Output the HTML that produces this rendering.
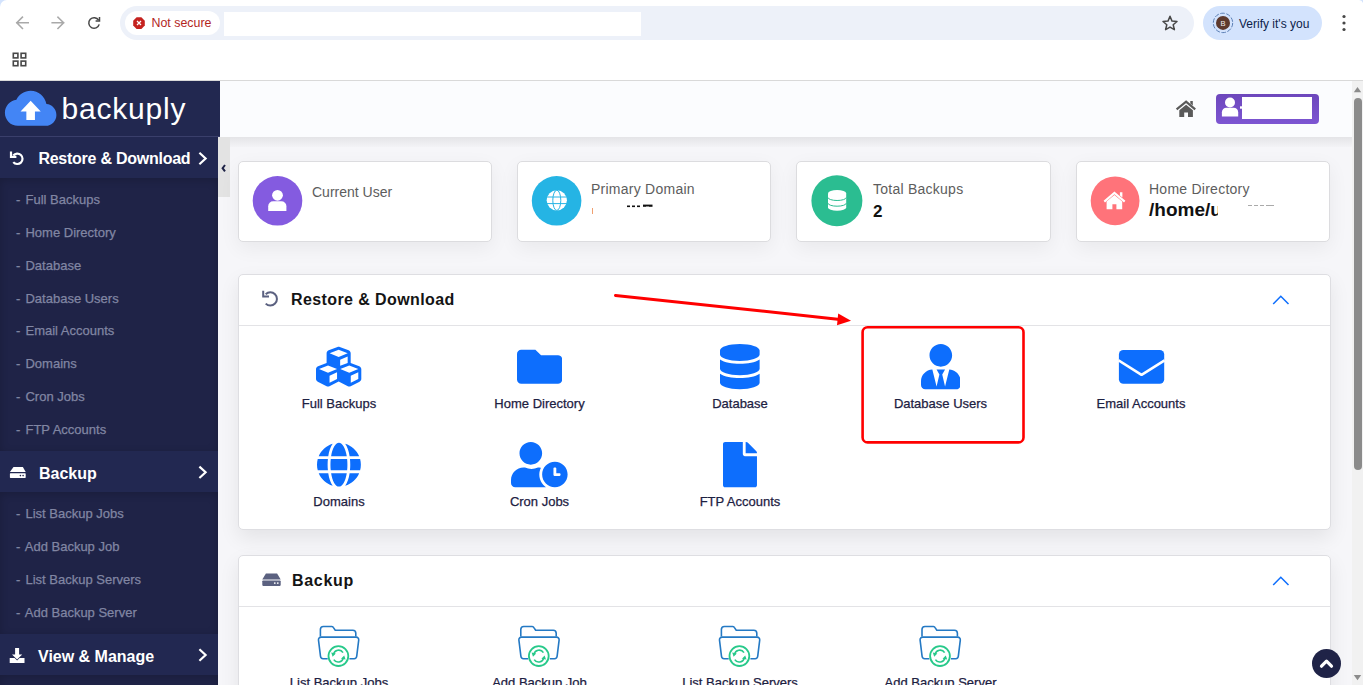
<!DOCTYPE html>
<html><head><meta charset="utf-8">
<style>
*{box-sizing:border-box;margin:0;padding:0}
html,body{width:1363px;height:685px;overflow:hidden;background:#fff;font-family:"Liberation Sans",sans-serif}
.a{position:absolute}
/* chrome */
#chrome{left:0;top:0;width:1363px;height:81px;background:#fff;border-bottom:1px solid #d9d9d9}
#omni{left:120px;top:6px;width:1074px;height:34px;border-radius:17px;background:#edf1f9}
#chip{left:125px;top:11px;width:95px;height:24px;border-radius:12px;background:#fff}
#verify{left:1203px;top:6px;width:119px;height:34px;border-radius:17px;background:#d3e3fd}
/* sidebar */
#side{left:0;top:81px;width:218px;height:604px;background:#1f2347}
#logo{left:0;top:81px;width:220px;height:56px;background:#222850;border-bottom:1px solid #3a3f6b}
.sh{left:0;width:218px;height:41px;background:#222851;color:#fff;font-weight:bold;font-size:16px}
.sh span{position:absolute;top:13.5px}
.si i{font-style:normal;margin-right:1.5px}
.si{left:16px;color:#8186a3;font-size:13px;white-space:pre;-webkit-text-stroke:0.25px #8186a3}
/* header */
#hdr{left:220px;top:81px;width:1132px;height:56px;background:#fbfcfe}
#main{left:218px;top:137px;width:1134px;height:548px;background:#f6f6f9}
#tab{left:218px;top:137px;width:12px;height:60px;background:#e3e3e3}
.card{top:161px;width:254px;height:81px;background:#fff;border:1px solid #dcdcdf;border-radius:5px;box-shadow:0 6px 20px rgba(0,0,0,.06)}
.circ{position:absolute;left:14px;top:14px;width:50px;height:50px;border-radius:50%}
.ct{position:absolute;left:74px;font-size:14px;color:#5d5d5d;white-space:pre}
.panel{left:238px;width:1093px;background:#fff;border:1px solid #dedee2;border-radius:5px;box-shadow:0 8px 20px rgba(0,0,0,.08)}
.ph{position:absolute;left:0;top:0;width:100%;height:51px;border-bottom:1px solid #e3e3e6}
.pt{position:absolute;left:52px;top:16px;font-size:16px;font-weight:bold;color:#141414;letter-spacing:0.4px}
.lbl{position:absolute;width:200px;text-align:center;font-size:13px;color:#1d2142;white-space:pre;-webkit-text-stroke:0.25px #1d2142}
#sb{left:1352px;top:81px;width:11px;height:604px;background:#f1f1f1}
</style></head><body>
<div id="chrome" class="a"></div>
<div id="omni" class="a"></div>
<div id="chip" class="a"></div>
<div class="a" style="left:224px;top:12px;width:417px;height:24px;background:#fff"></div>
<div class="a" style="left:151.5px;top:16.3px;font-size:12.4px;color:#b3261e">Not secure</div>
<div id="verify" class="a"></div>
<svg class="a" style="left:0;top:0" width="1363" height="45">
 <path d="M0 7 A7 7 0 0 1 7 0 L0 0Z" fill="#d3e3fd"/>
 <path d="M1363 3 A5 5 0 0 0 1358 0 L1363 0Z" fill="#d3e3fd"/>
 <g stroke="#a9a9a9" stroke-width="1.6" fill="none" stroke-linecap="square">
  <path d="M16.8 22.8H28.2M22.4 17.2L16.8 22.8L22.4 28.4"/>
  <path d="M52.2 22.8H63.6M58 17.2L63.6 22.8L58 28.4"/>
 </g>
 <path d="M98.6 20.2A5.3 5.3 0 1 0 99.2 24.4" stroke="#474747" stroke-width="1.5" fill="none"/>
 <path d="M95.6 21H99.5V17.1" stroke="#474747" stroke-width="1.5" fill="none"/>
 <polygon points="136.6,17.3 141.4,17.3 144.8,20.7 144.8,25.5 141.4,28.9 136.6,28.9 133.2,25.5 133.2,20.7" fill="#c5221f"/>
 <path d="M137 21L141 25M141 21L137 25" stroke="#fff" stroke-width="1.3"/>
 <path d="M1170 16.3L1172 21.1L1177 21.5L1173.2 24.8L1174.4 29.7L1170 27.1L1165.6 29.7L1166.8 24.8L1163 21.5L1168 21.1Z" stroke="#474747" stroke-width="1.5" fill="none" stroke-linejoin="round"/>
 <circle cx="1223" cy="22.9" r="9.7" fill="none" stroke="#5b7fb5" stroke-width="1" stroke-dasharray="4.5 1.6"/>
 <circle cx="1223" cy="22.9" r="7" fill="#5e3a2e"/>
 <text x="1223" y="25.6" font-size="7.5" fill="#eee" text-anchor="middle" font-family="Liberation Sans">B</text>
 <circle cx="1344" cy="16.5" r="1.6" fill="#474747"/><circle cx="1344" cy="23" r="1.6" fill="#474747"/><circle cx="1344" cy="29.5" r="1.6" fill="#474747"/>
</svg>
<svg class="a" style="left:12px;top:52px" width="16" height="16"><g fill="none" stroke="#474747" stroke-width="1.6"><rect x="1.3" y="1.3" width="4.6" height="4.6"/><rect x="9.1" y="1.3" width="4.6" height="4.6"/><rect x="1.3" y="9.1" width="4.6" height="4.6"/><rect x="9.1" y="9.1" width="4.6" height="4.6"/></g></svg>
<div class="a" style="left:1239px;top:16.5px;font-size:12px;color:#0b1d4a">Verify it's you</div>

<div id="side" class="a"></div>
<div id="logo" class="a"></div>
<div class="a" style="left:61.5px;top:91.5px;font-size:30px;color:#fff;letter-spacing:0.8px">backuply</div>


<div class="a" style="left:0;top:178px;width:218px;height:273px;box-shadow:inset 0 2px 8px rgba(0,0,0,.18)"></div>
<div class="a" style="left:0;top:492px;width:218px;height:142px;box-shadow:inset 0 2px 8px rgba(0,0,0,.18)"></div>
<div class="a" style="left:0;top:675px;width:218px;height:30px;box-shadow:inset 0 2px 8px rgba(0,0,0,.18)"></div>
<div class="sh a" style="top:137px"><span style="left:38.4px;top:12.8px;letter-spacing:-0.25px">Restore &amp; Download</span></div>
<div class="si a" style="top:192px"><i>-</i> Full Backups</div>
<div class="si a" style="top:225px"><i>-</i> Home Directory</div>
<div class="si a" style="top:258px"><i>-</i> Database</div>
<div class="si a" style="top:291px"><i>-</i> Database Users</div>
<div class="si a" style="top:323px"><i>-</i> Email Accounts</div>
<div class="si a" style="top:356px"><i>-</i> Domains</div>
<div class="si a" style="top:389px"><i>-</i> Cron Jobs</div>
<div class="si a" style="top:422px"><i>-</i> FTP Accounts</div>
<div class="sh a" style="top:451px"><span style="left:39px">Backup</span></div>
<div class="si a" style="top:506px"><i>-</i> List Backup Jobs</div>
<div class="si a" style="top:539px"><i>-</i> Add Backup Job</div>
<div class="si a" style="top:572px"><i>-</i> List Backup Servers</div>
<div class="si a" style="top:605px"><i>-</i> Add Backup Server</div>
<div class="sh a" style="top:634px"><span style="left:38px">View &amp; Manage</span></div>

<div id="hdr" class="a"></div>
<div id="main" class="a"></div>
<div class="a" style="left:218px;top:137px;width:1134px;height:10px;background:linear-gradient(#e4e4e7,#f3f3f6)"></div>
<div class="a" style="left:1216px;top:94px;width:103px;height:30px;border-radius:4px;background:linear-gradient(#6d47bc,#7d55d2)"></div>
<div class="a" style="left:1242px;top:97px;width:70px;height:22px;background:#fff"></div>
<svg class="a" style="left:1170px;top:90px" width="80" height="40">
 <g fill="#5a5a5a">
  <path d="M6.6 19.4L16.1 11.7L25.2 19.4" stroke="#5a5a5a" stroke-width="2.2" fill="none"/>
  <path d="M20.3 11.1H22.8V15.6L20.3 13.5Z"/>
  <path d="M9.3 20.3L16.1 14.7L22.9 20.3V27H18V22.4H14.2V27H9.3Z"/>
 </g>
 <g fill="#fff"><circle cx="60" cy="12.5" r="5"/><path d="M51.9 26.4V22.3A4.5 4.5 0 0 1 56.4 17.8H63.7A4.5 4.5 0 0 1 68.2 22.3V26.4Z"/><rect x="70" y="16.3" width="3" height="2.4"/></g>
</svg>
<div id="tab" class="a"></div>
<svg class="a" style="left:0;top:0" width="232" height="685">
 <g transform="translate(4.9,82.04) scale(2.146,2.19)"><path d="M19.35 10.04C18.67 6.59 15.64 4 12 4 9.11 4 6.6 5.64 5.35 8.04 2.34 8.36 0 10.91 0 14c0 3.31 2.69 6 6 6h13c2.76 0 5-2.24 5-5 0-2.64-2.05-4.78-4.65-4.96z" fill="#4385f5"/><path d="M14 13.4v3.9h-4v-3.9H7.3l4.7-4.8 4.7 4.8h-2.7z" fill="#fff"/></g>
 <g fill="none" stroke="#fff" stroke-width="2.2">
  <path d="M13.3 155.5A5.2 5.2 0 1 1 13.3 162.1"/>
  <path d="M11 151.5V156.8H16.4"/>
  <path d="M199.4 152.8L205.6 158.5L199.4 164.2"/>
  <path d="M199.4 466.6L205.6 472.3L199.4 478"/>
  <path d="M199.4 649.3L205.6 655L199.4 660.7"/>
 </g>
 <path d="M13.5 466.9H22.9L25.7 472H9.9Z" fill="#fff"/>
 <rect x="9.9" y="473.3" width="15.8" height="4.6" rx="0.6" fill="#fff"/>
 <circle cx="20.4" cy="475.6" r="0.8" fill="#1f2347"/><circle cx="23.1" cy="475.6" r="0.8" fill="#1f2347"/>
 <path d="M15.1 648.1H19.1V654.5H22.2L17.1 659.6L12 654.5H15.1Z" fill="#fff"/>
 <path d="M9.7 658H14.6L17.1 660.5L19.6 658H24.5V662.9H9.7Z" fill="#fff"/>
 <path d="M225 165L222.6 168.2L225 171.4" stroke="#1f2347" stroke-width="2" fill="none"/>
</svg>

<div class="card a" style="left:238px"></div>
<div class="card a" style="left:517px"></div>
<div class="card a" style="left:796px;width:255px"></div>
<div class="card a" style="left:1076px"></div>
<div class="ct a" style="left:312px;top:184px">Current User</div>
<div class="ct a" style="left:591px;top:180.5px;letter-spacing:0.25px">Primary Domain</div>
<div class="ct a" style="left:873px;top:180.5px;letter-spacing:0.25px">Total Backups</div>
<div class="ct a" style="left:1149px;top:180.5px;letter-spacing:0.25px">Home Directory</div>
<div class="a" style="left:873px;top:201.5px;font-size:17px;font-weight:bold;color:#111">2</div>
<div class="a" style="left:1149px;top:198.8px;font-size:19px;font-weight:bold;color:#111">/home/u</div>
<div class="a" style="left:1218px;top:196px;width:10px;height:24px;background:#fff"></div>
<svg class="a" style="left:0;top:0" width="1363" height="685">
 <circle cx="277.5" cy="200.8" r="24.8" fill="#845be0"/>
 <circle cx="556.6" cy="200.8" r="24.8" fill="#25b4e4"/>
 <circle cx="836.9" cy="200.8" r="25.5" fill="#2bbd91"/>
 <circle cx="1115.1" cy="200.8" r="24.4" fill="#ff737a"/>
 <g fill="#fff">
  <circle cx="277.5" cy="195.3" r="5.4"/>
  <path d="M268.2 211V206.2A5 5 0 0 1 273.2 201.2H281.4A5 5 0 0 1 286.4 206.2V211Z"/>
 </g>
 <g>
  <circle cx="556.8" cy="200.3" r="10.1" fill="#fff"/>
  <g stroke="#25b4e4" stroke-width="1" fill="none">
   <ellipse cx="556.8" cy="200.3" rx="4" ry="10.1"/>
   <path d="M546.5 197H567M546.5 203.6H567"/>
  </g>
 </g>
 <g fill="#fff">
  <path d="M828 193.4A9.1 3.4 0 0 1 846.2 193.4V207.4A9.1 3.4 0 0 1 828 207.4Z"/>
 </g>
 <g stroke="#2bbd91" stroke-width="1" fill="none">
  <path d="M828 197.5A9.1 3 0 0 0 846.2 197.5"/>
  <path d="M828 203.2A9.1 3 0 0 0 846.2 203.2"/>
 </g>
 <g fill="#fff">
  <path d="M1103.6 200.8L1114.4 191.6L1125.4 200.8L1124 202.4L1114.4 194.3L1105 202.4Z"/>
  <path d="M1119.9 192.2H1122.4V197.6L1119.9 195.5Z"/>
  <path d="M1106.6 201.6L1114.4 195L1122.2 201.6V209.2H1116.4V204.2H1112.4V209.2H1106.6Z"/>
 </g>
 <!-- primary domain redactions -->
 <rect x="592" y="208" width="1" height="6" fill="#f0a070"/>
 <g fill="#111"><rect x="627" y="205.5" width="3" height="1.6"/><rect x="632" y="205.5" width="3" height="1.6"/><rect x="637" y="205.5" width="3" height="1.6"/><rect x="643" y="204.6" width="9.5" height="2.2"/><rect x="646" y="206.6" width="3" height="3" fill="#fff"/></g>
 <g fill="#aaa"><rect x="1248" y="205" width="4" height="1"/><rect x="1254" y="205" width="4" height="1"/><rect x="1260" y="205" width="4" height="1"/><rect x="1266" y="205" width="8" height="1"/></g>
</svg>
<div class="panel a" style="top:274px;height:256px"><div class="ph"></div><div class="pt">Restore &amp; Download</div></div>
<div class="panel a" style="top:555px;height:200px"><div class="ph"></div><div class="pt" style="left:53px;letter-spacing:0.7px">Backup</div></div>

<svg class="a" style="left:316.35px;top:344.3px" width="45.30" height="45.3" viewBox="0 0 512 512"><path d="M488.6 250.2L392 214V105.5c0-15-9.3-28.4-23.4-33.7l-100-37.5c-8.1-3.1-17.1-3.1-25.3 0l-100 37.5c-14.1 5.3-23.4 18.7-23.4 33.7V214l-96.6 36.2C9.3 255.5 0 268.9 0 283.9V394c0 13.6 7.7 26.1 19.9 32.2l100 50c10.1 5.1 22.1 5.1 32.2 0l103.9-52 103.9 52c10.1 5.1 22.1 5.1 32.2 0l100-50c12.200-6.1 19.9-18.6 19.9-32.2V283.9c0-15-9.3-28.4-23.4-33.7zM358 214.8l-85 31.9v-68.2l85-37v73.3zM154 104.1l102-38.2 102 38.2v.6l-102 41.4-102-41.4v-.6zm84 291.1l-85 42.5v-79.1l85-38.8v75.4zm0-112l-102 41.4-102-41.4v-.6l102-38.2 102 38.2v.6zm240 112l-85 42.5v-79.1l85-38.8v75.4zm0-112l-102 41.4-102-41.4v-.6l102-38.2 102 38.2v.6z" fill="#0d6efd"/></svg>
<svg class="a" style="left:516.85px;top:344.3px" width="45.30" height="45.3" viewBox="0 0 512 512"><path d="M464 128H272l-64-64H48C21.49 64 0 85.49 0 112v288c0 26.51 21.49 48 48 48h416c26.51 0 48-21.49 48-48V176c0-26.51-21.49-48-48-48z" fill="#0d6efd"/></svg>
<svg class="a" style="left:720.18px;top:344.3px" width="39.64" height="45.3" viewBox="0 0 448 512"><path d="M448 73.143v45.714C448 159.143 347.667 192 224 192S0 159.143 0 118.857V73.143C0 32.857 100.333 0 224 0s224 32.857 224 73.143zM448 176v102.857C448 319.143 347.667 352 224 352S0 319.143 0 278.857V176c48.125 33.143 136.208 48.572 224 48.572S399.874 209.143 448 176zm0 160v102.857C448 479.143 347.667 512 224 512S0 479.143 0 438.857V336c48.125 33.143 136.208 48.572 224 48.572S399.874 369.143 448 336z" fill="#0d6efd"/></svg>
<svg class="a" style="left:920.58px;top:344.3px" width="39.64" height="45.3" viewBox="0 0 448 512"><path d="M224 256c70.7 0 128-57.3 128-128S294.7 0 224 0 96 57.3 96 128s57.3 128 128 128zm95.8 32.6L272 480l-32-136 32-56h-96l32 56-32 136-47.8-191.4C56.9 292 0 350.3 0 422.4V464c0 26.5 21.5 48 48 48h352c26.5 0 48-21.5 48-48v-41.6c0-72.1-56.9-130.4-128.2-133.8z" fill="#0d6efd"/></svg>
<svg class="a" style="left:317.06px;top:442.4px" width="43.88" height="45.3" viewBox="0 0 496 512"><path d="M336.5 160C322 70.7 287.8 8 248 8s-74 62.7-88.5 152h177zM152 256c0 22.2 1.2 43.5 3.3 64h185.3c2.1-20.5 3.3-41.8 3.3-64s-1.2-43.5-3.3-64H155.3c-2.1 20.5-3.3 41.8-3.3 64zm324.7-96c-28.6-67.9-86.5-120.4-158-141.6 24.4 33.8 41.2 84.7 50 141.6h108zM177.2 18.4C105.8 39.6 47.8 92.1 19.3 160h108c8.7-56.9 25.5-107.8 49.9-141.6zM487.4 192H372.7c2.1 21 3.3 42.5 3.3 64s-1.2 43-3.3 64h114.6c5.5-20.5 8.6-41.8 8.6-64s-3.1-43.5-8.5-64zM120 256c0-21.5 1.2-43 3.3-64H8.6C3.2 212.5 0 233.8 0 256s3.2 43.5 8.6 64h114.6c-2-21-3.2-42.5-3.2-64zm39.5 96c14.5 89.3 48.7 152 88.5 152s74-62.7 88.5-152h-177zm159.3 141.6c71.4-21.2 129.4-73.7 158-141.6h-108c-8.800 56.9-25.6 107.8-50 141.6zM19.3 352c28.6 67.9 86.5 120.4 158 141.6-24.4-33.8-41.2-84.7-50-141.6h-108z" fill="#0d6efd"/></svg>
<svg class="a" style="left:511.29px;top:442.4px" width="56.62" height="45.3" viewBox="0 0 640 512"><path d="M496 224c-79.6 0-144 64.4-144 144s64.4 144 144 144 144-64.4 144-144-64.4-144-144-144zm64 150.3c0 5.3-4.4 9.7-9.7 9.7h-60.6c-5.3 0-9.7-4.4-9.7-9.7v-76.6c0-5.3 4.4-9.7 9.7-9.7h12.6c5.3 0 9.7 4.4 9.7 9.7V352h38.3c5.3 0 9.7 4.4 9.7 9.7v12.6zM320 368c0-27.77 7.030-53.8 19.04-76.73-.04 0-.08-.01-.12-.01C333.300 290.800 327.700 288 321.600 288h-16.7c-22.2 10.2-46.9 16-73.1 16s-50.8-5.8-73.1-16h-16.7C63.3 288 0 351.300 0 430.400V464c0 26.5 21.5 48 48 48h347.1c-45.32-31.920-75.1-84.560-75.1-144zm-96-112c70.7 0 128-57.3 128-128S294.7 0 224 0 96 57.3 96 128s57.3 128 128 128z" fill="#0d6efd"/></svg>
<svg class="a" style="left:723.01px;top:442.4px" width="33.97" height="45.3" viewBox="0 0 384 512"><path d="M224 136V0H24C10.7 0 0 10.7 0 24v464c0 13.3 10.7 24 24 24h336c13.3 0 24-10.7 24-24V160H248c-13.2 0-24-10.8-24-24zm160-14.1v6.1H256V0h6.1c6.4 0 12.5 2.5 17 7l97.9 98c4.5 4.5 7 10.6 7 16.9z" fill="#0d6efd"/></svg>
<svg class="a" style="left:1118px;top:349px" width="48" height="36"><rect x="0.9" y="0.9" width="45.3" height="33.9" rx="4.5" fill="#0d6efd"/><path d="M0.5 11.4L23.55 25.8L46.6 11.4" stroke="#fff" stroke-width="2.6" fill="none" stroke-linejoin="round"/></svg>
<div class="lbl" style="left:239px;top:396px">Full Backups</div>
<div class="lbl" style="left:439.5px;top:396px">Home Directory</div>
<div class="lbl" style="left:640px;top:396px">Database</div>
<div class="lbl" style="left:840.5px;top:396px">Database Users</div>
<div class="lbl" style="left:1041px;top:396px">Email Accounts</div>
<div class="lbl" style="left:239px;top:494px">Domains</div>
<div class="lbl" style="left:439.5px;top:494px">Cron Jobs</div>
<div class="lbl" style="left:640px;top:494px">FTP Accounts</div>
<svg class="a" style="left:0;top:0" width="1363" height="685">
 <g fill="none" stroke="#5b6180" stroke-width="2">
  <path d="M265.7 294.2A6.6 6.6 0 1 1 265.7 303.6"/>
  <path d="M263.2 290.8V296.6H269"/>
 </g>
 <path d="M1273.2 304L1280.8 296.3L1288.5 304" stroke="#0d6efd" stroke-width="1.5" fill="none"/>
 <path d="M1273.2 585L1280.8 577.3L1288.5 585" stroke="#0d6efd" stroke-width="1.5" fill="none"/>
 <path d="M615.5 295.5L840 319.4" stroke="#ff0000" stroke-width="3" stroke-linecap="round"/>
 <path d="M851 320.8L838.2 313.6L837 325.2Z" fill="#ff0000"/>
 <rect x="862.6" y="327.3" width="160.9" height="115.1" rx="5" fill="none" stroke="#ff0000" stroke-width="2.6"/>
 <path d="M265.9 573.6H277.1L280.7 579.4H262.3Z" fill="#5b6180"/>
 <rect x="262.3" y="580.4" width="18.4" height="5.5" rx="0.8" fill="#5b6180"/>
 <circle cx="274.8" cy="583.1" r="0.9" fill="#fff"/><circle cx="277.8" cy="583.1" r="0.9" fill="#fff"/>
</svg>
<svg class="a" style="left:0;top:0" width="1363" height="685">
<g transform="translate(0.0,0)">
 <path d="M320.4 636.6V629.5A3 3 0 0 1 323.4 626.5H331.8A2 2 0 0 1 333.5 627.6L335.2 630.2H352.8A3 3 0 0 1 355.8 633.2V636.6" stroke="#2479c4" stroke-width="1.6" fill="none"/>
 <path d="M327.7 658.7H323.1A2.6 2.6 0 0 1 320.5 656.3L318.5 640.1A2.6 2.6 0 0 1 321.1 637.1H356.1A2.6 2.6 0 0 1 358.7 640.1L356.7 656.3A2.6 2.6 0 0 1 354.1 658.7H349.4" stroke="#2479c4" stroke-width="1.6" fill="none"/>
 <circle cx="338.4" cy="656.1" r="9.9" stroke="#27c98a" stroke-width="1.8" fill="none"/>
 <path d="M333.5 654.4A5.2 5.2 0 0 1 343 652.6M343.3 657.8A5.2 5.2 0 0 1 333.8 659.6" stroke="#27c98a" stroke-width="1.6" fill="none"/>
 <path d="M331.2 652.6L335.8 653.4L332.6 656.8Z M345.6 659.6L341 658.8L344.2 655.4Z" fill="#27c98a"/>
</g>
<g transform="translate(200.4,0)">
 <path d="M320.4 636.6V629.5A3 3 0 0 1 323.4 626.5H331.8A2 2 0 0 1 333.5 627.6L335.2 630.2H352.8A3 3 0 0 1 355.8 633.2V636.6" stroke="#2479c4" stroke-width="1.6" fill="none"/>
 <path d="M327.7 658.7H323.1A2.6 2.6 0 0 1 320.5 656.3L318.5 640.1A2.6 2.6 0 0 1 321.1 637.1H356.1A2.6 2.6 0 0 1 358.7 640.1L356.7 656.3A2.6 2.6 0 0 1 354.1 658.7H349.4" stroke="#2479c4" stroke-width="1.6" fill="none"/>
 <circle cx="338.4" cy="656.1" r="9.9" stroke="#27c98a" stroke-width="1.8" fill="none"/>
 <path d="M333.5 654.4A5.2 5.2 0 0 1 343 652.6M343.3 657.8A5.2 5.2 0 0 1 333.8 659.6" stroke="#27c98a" stroke-width="1.6" fill="none"/>
 <path d="M331.2 652.6L335.8 653.4L332.6 656.8Z M345.6 659.6L341 658.8L344.2 655.4Z" fill="#27c98a"/>
</g>
<g transform="translate(401.0,0)">
 <path d="M320.4 636.6V629.5A3 3 0 0 1 323.4 626.5H331.8A2 2 0 0 1 333.5 627.6L335.2 630.2H352.8A3 3 0 0 1 355.8 633.2V636.6" stroke="#2479c4" stroke-width="1.6" fill="none"/>
 <path d="M327.7 658.7H323.1A2.6 2.6 0 0 1 320.5 656.3L318.5 640.1A2.6 2.6 0 0 1 321.1 637.1H356.1A2.6 2.6 0 0 1 358.7 640.1L356.7 656.3A2.6 2.6 0 0 1 354.1 658.7H349.4" stroke="#2479c4" stroke-width="1.6" fill="none"/>
 <circle cx="338.4" cy="656.1" r="9.9" stroke="#27c98a" stroke-width="1.8" fill="none"/>
 <path d="M333.5 654.4A5.2 5.2 0 0 1 343 652.6M343.3 657.8A5.2 5.2 0 0 1 333.8 659.6" stroke="#27c98a" stroke-width="1.6" fill="none"/>
 <path d="M331.2 652.6L335.8 653.4L332.6 656.8Z M345.6 659.6L341 658.8L344.2 655.4Z" fill="#27c98a"/>
</g>
<g transform="translate(601.6,0)">
 <path d="M320.4 636.6V629.5A3 3 0 0 1 323.4 626.5H331.8A2 2 0 0 1 333.5 627.6L335.2 630.2H352.8A3 3 0 0 1 355.8 633.2V636.6" stroke="#2479c4" stroke-width="1.6" fill="none"/>
 <path d="M327.7 658.7H323.1A2.6 2.6 0 0 1 320.5 656.3L318.5 640.1A2.6 2.6 0 0 1 321.1 637.1H356.1A2.6 2.6 0 0 1 358.7 640.1L356.7 656.3A2.6 2.6 0 0 1 354.1 658.7H349.4" stroke="#2479c4" stroke-width="1.6" fill="none"/>
 <circle cx="338.4" cy="656.1" r="9.9" stroke="#27c98a" stroke-width="1.8" fill="none"/>
 <path d="M333.5 654.4A5.2 5.2 0 0 1 343 652.6M343.3 657.8A5.2 5.2 0 0 1 333.8 659.6" stroke="#27c98a" stroke-width="1.6" fill="none"/>
 <path d="M331.2 652.6L335.8 653.4L332.6 656.8Z M345.6 659.6L341 658.8L344.2 655.4Z" fill="#27c98a"/>
</g>
</svg>
<div class="lbl" style="left:239px;top:674.5px">List Backup Jobs</div>
<div class="lbl" style="left:439.5px;top:674.5px">Add Backup Job</div>
<div class="lbl" style="left:640px;top:674.5px">List Backup Servers</div>
<div class="lbl" style="left:840.5px;top:674.5px">Add Backup Server</div>
<div class="a" style="left:1352px;top:81px;width:11px;height:604px;background:#f1f1f1"></div>
<div class="a" style="left:1354px;top:98px;width:8px;height:372px;border-radius:4px;background:#8b8b8b"></div>
<svg class="a" style="left:1352px;top:81px" width="11" height="604"><path d="M1.8 11.2L5.5 6L9.2 11.2Z" fill="#8b8b8b"/><path d="M1.8 594L5.5 599.2L9.2 594Z" fill="#8b8b8b"/></svg>
<div class="a" style="left:1311.5px;top:648.5px;width:29px;height:29px;border-radius:50%;background:#1f2347"></div>
<svg class="a" style="left:1311.5px;top:648.5px" width="29" height="29"><path d="M9.5 17.2L14.5 12.2L19.5 17.2" stroke="#fff" stroke-width="3.2" fill="none" stroke-linecap="round" stroke-linejoin="round"/></svg>

</body></html>
